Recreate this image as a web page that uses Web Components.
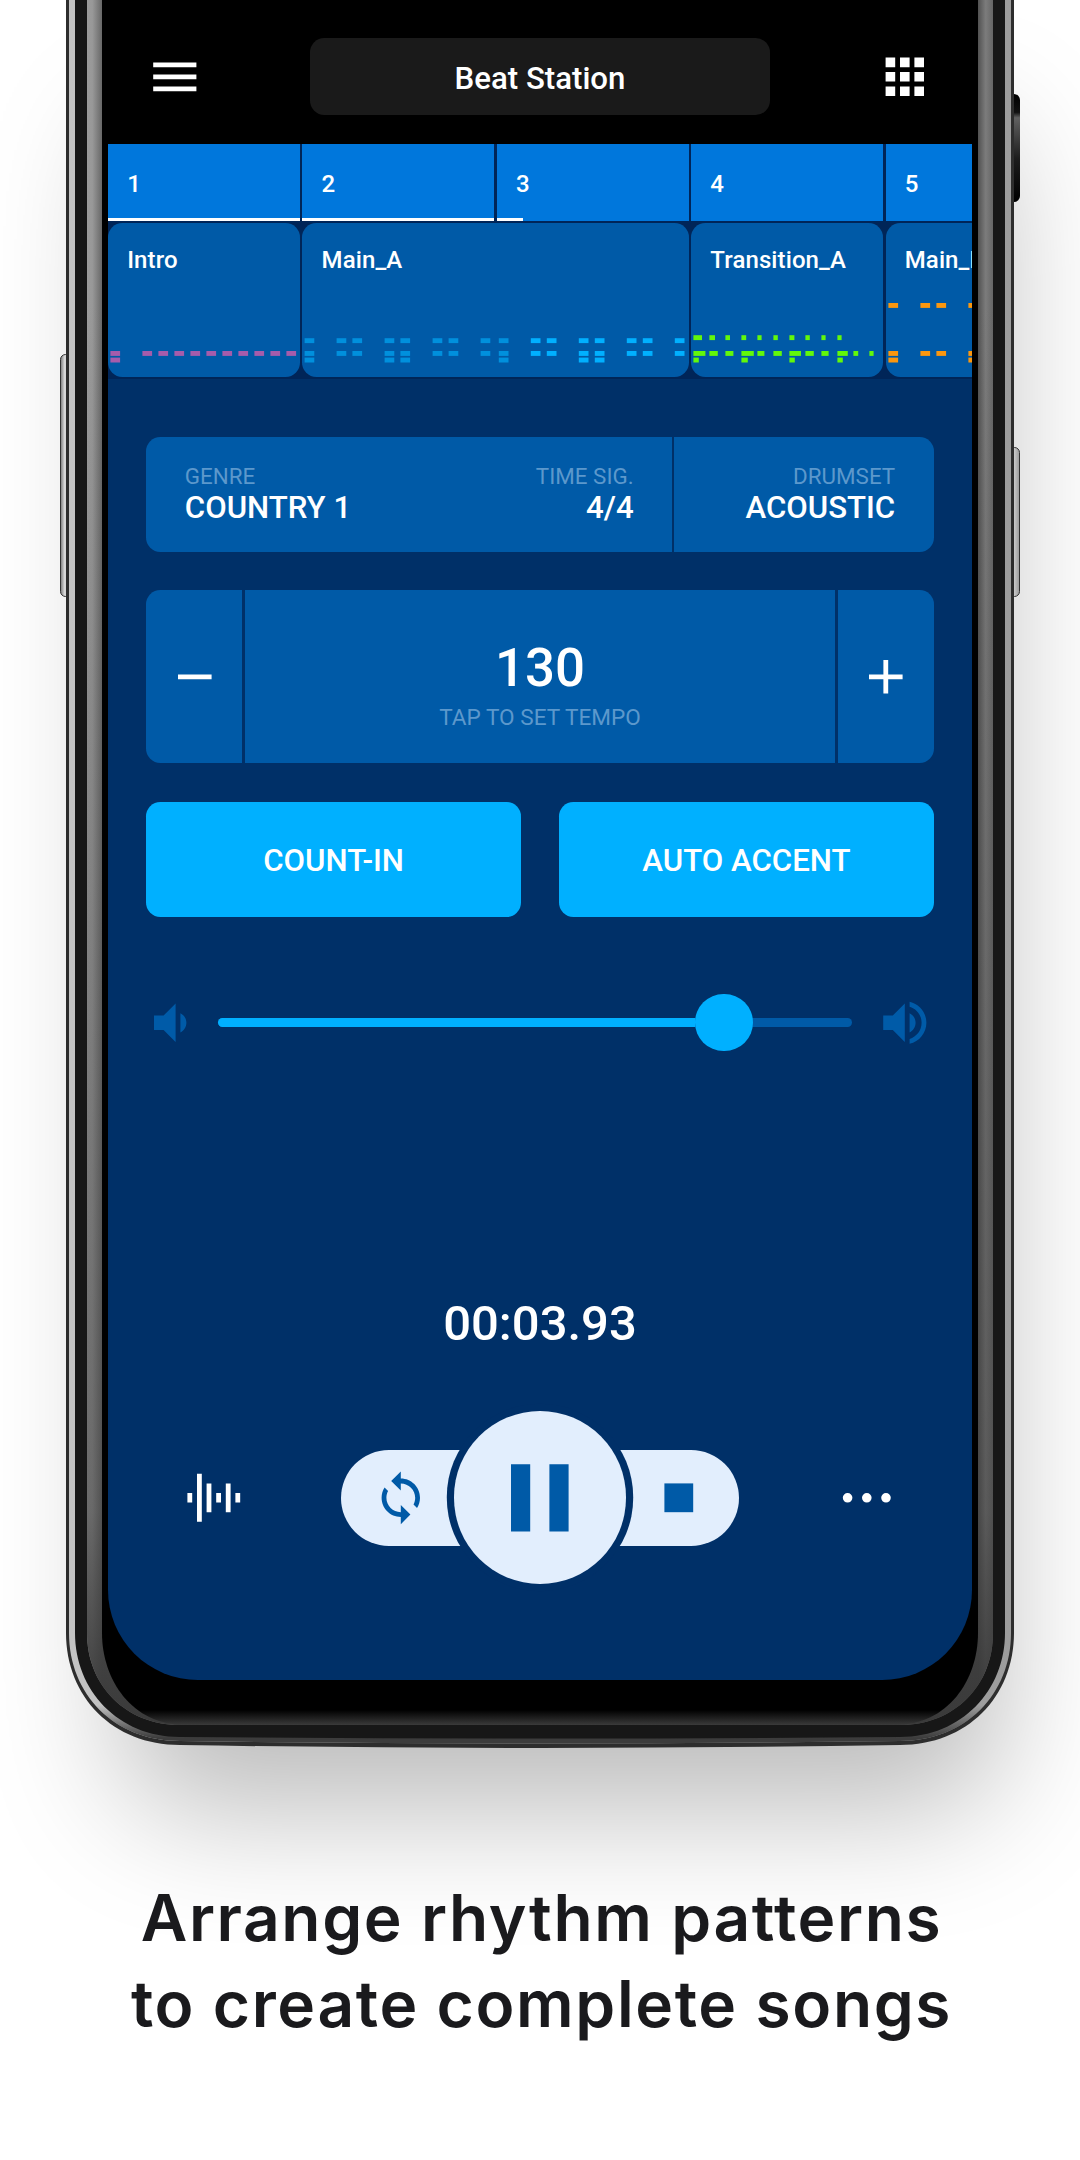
<!DOCTYPE html>
<html lang="en">
<head>
<meta charset="UTF-8">
<title>Beat Station</title>
<style>
  body {
    margin: 0;
    background: #fff;
    overflow: hidden;
  }
</style>
</head>
<body>
<promo-page>
  <phone-frame>
    <app-header>Beat Station</app-header>
    <song-arranger></song-arranger>
    <beat-controls>
      <info-card>
        <info-field label="GENRE">COUNTRY 1</info-field>
        <info-field label="TIME SIG." align="right">4/4</info-field>
        <info-field slot="side" label="DRUMSET" align="right">ACOUSTIC</info-field>
      </info-card>
      <tempo-card bpm="130">TAP TO SET TEMPO</tempo-card>
      <toggle-row>
        <toggle-button>COUNT-IN</toggle-button>
        <toggle-button>AUTO ACCENT</toggle-button>
      </toggle-row>
      <volume-slider></volume-slider>
    </beat-controls>
    <transport-bar time="00:03.93"></transport-bar>
  </phone-frame>
  <promo-caption>
    <span>Arrange rhythm patterns</span>
    <span slot="second">to create complete songs</span>
  </promo-caption>
</promo-page>

<script>
const ICONS = {
    menu: 'M3 18h18v-2H3v2zm0-5h18v-2H3v2zm0-7v2h18V6H3z',
    apps: 'M4 8h4V4H4v4zm6 12h4v-4h-4v4zm-6 0h4v-4H4v4zm0-6h4v-4H4v4zm6 0h4v-4h-4v4zm6-10v4h4V4h-4zm-6 4h4V4h-4v4zm6 6h4v-4h-4v4zm0 6h4v-4h-4v4z',
    minus: 'M19 13H5v-2h14v2z',
    plus: 'M19 13h-6v6h-2v-6H5v-2h6V5h2v6h6v2z',
    volumeDown: 'M18.5 12c0-1.77-1.02-3.29-2.5-4.03v8.05c1.48-.73 2.5-2.25 2.5-4.02zM5 9v6h4l5 5V4L9 9H5z',
    volumeUp: 'M3 9v6h4l5 5V4L7 9H3zm13.5 3c0-1.77-1.02-3.29-2.5-4.03v8.05c1.48-.73 2.5-2.25 2.5-4.02zM14 3.23v2.06c2.89.86 5 3.54 5 6.71s-2.11 5.85-5 6.71v2.06c4.01-.91 7-4.49 7-8.77s-2.99-7.86-7-8.77z',
    sync: 'M12 4V1L8 5l4 4V6c3.31 0 6 2.69 6 6 0 1.01-.25 1.97-.7 2.8l1.46 1.46C19.54 15.03 20 13.57 20 12c0-4.42-3.58-8-8-8zm0 14c-3.31 0-6-2.69-6-6 0-1.01.25-1.97.7-2.8L5.24 7.74C4.46 8.97 4 10.43 4 12c0 4.42 3.58 8 8 8v3l4-4-4-4v3z',
    wave: 'M1 10h2v4H1zM5 2h2v20H5zM9 6h2v12H9zM13 10h2v4h-2zM17 6h2v12h-2zM21 10h2v4h-2z',
    more: 'M6 12a2 2 0 1 1-4 0a2 2 0 1 1 4 0zM14 12a2 2 0 1 1-4 0a2 2 0 1 1 4 0zM22 12a2 2 0 1 1-4 0a2 2 0 1 1 4 0z',
    stop: 'M6 6h12v12H6z',
    pause: 'M0 -2h8v28H0zM16 -2h8v28h-8z'
};

class BaseElement extends HTMLElement {
    constructor() {
        super();
        this.attachShadow({ mode: 'open' });
    }

    connectedCallback() {
        const template = document.createElement('template');
        template.innerHTML = this.render();
        this.shadowRoot.innerHTML = '';
        this.shadowRoot.appendChild(template.content.cloneNode(true));
    }
}

class AppIcon extends BaseElement {
    render() {
        return `
            <style>
                :host { display: block; flex: none; width: 57.6px; height: 57.6px; }
                svg { display: block; width: 100%; height: 100%; fill: currentColor; overflow: visible; }
            </style>
            <svg viewBox="0 0 24 24"><path d="${ICONS[this.getAttribute('name')]}"/></svg>
        `;
    }
}

class PromoPage extends BaseElement {
    render() {
        return `
            <style>
                :host {
                    display: flex;
                    flex-direction: column;
                    align-items: center;
                    width: 1080px;
                    height: 2160px;
                    overflow: hidden;
                    background: #fff;
                }
            </style>
            <slot></slot>
        `;
    }
}

class PhoneFrame extends BaseElement {
    render() {
        return `
            <style>
                :host {
                    display: grid;
                    flex: none;
                    width: 1080px;
                    height: 1748px;
                    justify-items: center;
                }
                .shadow, .body, .screen { grid-area: 1 / 1; }
                .shadow {
                    width: 948px;
                    height: 1744px;
                    border-radius: 0 0 110px 110px;
                    box-shadow: 20px 100px 130px -35px rgba(0, 0, 0, 0.27);
                }
                .body { width: 1080px; height: 1748px; overflow: visible; z-index: 1; }
                .screen {
                    z-index: 2;
                    display: flex;
                    flex-direction: column;
                    width: 864px;
                    height: 1680px;
                    overflow: hidden;
                    border-radius: 0 0 90px 90px;
                    background: #003068;
                    color: #fff;
                    font-family: Roboto, sans-serif;
                    font-weight: 500;
                }
            </style>
            <div class="shadow"></div>
            <svg class="body" viewBox="0 0 1080 1748">
                <defs>
                    <linearGradient id="silver"><stop offset="0" stop-color="#777"/><stop offset=".35" stop-color="#ddd"/><stop offset="1" stop-color="#999"/></linearGradient>
                    <linearGradient id="power" x2="0" y2="1"><stop offset="0" stop-color="#000"/><stop offset=".17" stop-color="#111"/><stop offset=".22" stop-color="#606060"/><stop offset=".6" stop-color="#1c1c1c"/><stop offset="1" stop-color="#000"/></linearGradient>
                    <linearGradient id="edge"><stop offset="0" stop-color="#c4c4c4"/><stop offset="1" stop-color="#9c9c9c"/></linearGradient>
                    <linearGradient id="edgeFade" gradientUnits="userSpaceOnUse" x1="0" y1="1705" x2="0" y2="1738"><stop offset="0" stop-color="#3c3c3c" stop-opacity="0"/><stop offset="1" stop-color="#3c3c3c"/></linearGradient>
                    <linearGradient id="bezel" gradientUnits="userSpaceOnUse" x1="87" y1="0" x2="993" y2="0">
                        <stop offset="0" stop-color="#9c9c9c"/><stop offset=".006" stop-color="#989898"/><stop offset=".0165" stop-color="#686868"/>
                        <stop offset=".984" stop-color="#545454"/><stop offset=".992" stop-color="#7c7c7c"/><stop offset="1" stop-color="#666"/>
                    </linearGradient>
                    <linearGradient id="bezelFade" gradientUnits="userSpaceOnUse" x1="0" y1="300" x2="0" y2="1725"><stop offset="0" stop-color="#3a3a3a" stop-opacity="0"/><stop offset=".85" stop-color="#3a3a3a" stop-opacity=".5"/><stop offset="1" stop-color="#3a3a3a"/></linearGradient>
                    <linearGradient id="glass" gradientUnits="userSpaceOnUse" x1="0" y1="1710" x2="0" y2="1725"><stop offset="0" stop-color="#000"/><stop offset="1" stop-color="#3a3a3a"/></linearGradient>
                </defs>
                <rect x="60.5" y="354.5" width="12" height="242" rx="5" fill="url(#silver)" stroke="#333"/>
                <rect x="1008" y="447.5" width="11.5" height="149" rx="5" fill="url(#silver)" stroke="#333"/>
                <rect x="1008" y="94" width="12" height="108" rx="6" fill="url(#power)"/>
                <path fill="#2d2d2d" d="M66 0V1633C66 1697 113 1745 180 1745Q540 1751 900 1745C967 1745 1014 1697 1014 1633V0Z"/>
                <path fill="url(#edge)" d="M69 0V1633C69 1694 114 1741 180 1741Q540 1746 900 1741C966 1741 1011 1694 1011 1633V0Z"/>
                <path fill="url(#edgeFade)" d="M69 0V1633C69 1694 114 1741 180 1741Q540 1746 900 1741C966 1741 1011 1694 1011 1633V0Z"/>
                <path fill="#171717" d="M75 0V1633C75 1690 118 1737 180 1737Q540 1740 900 1737C962 1737 1005 1690 1005 1633V0Z"/>
                <path fill="url(#bezel)" d="M87 0V1633C87 1685 125 1725 180 1725H900C955 1725 993 1685 993 1633V0Z"/>
                <path fill="url(#bezelFade)" d="M87 0V1633C87 1685 125 1725 180 1725H900C955 1725 993 1685 993 1633V0Z"/>
                <path fill="url(#glass)" d="M102 0V1633C102 1680 132 1725 185 1725H895C948 1725 978 1680 978 1633V0Z"/>
            </svg>
            <div class="screen"><slot></slot></div>
        `;
    }
}

class AppHeader extends BaseElement {
    render() {
        return `
            <style>
                :host {
                    display: flex;
                    flex: none;
                    align-items: center;
                    justify-content: space-between;
                    box-sizing: border-box;
                    height: 144px;
                    padding: 9px 38.4px 0;
                    background: #000;
                }
                .title {
                    width: 460.8px;
                    height: 76.8px;
                    border-radius: 14.4px;
                    background: #1a1a1a;
                    font-size: 31.2px;
                    line-height: 81px;
                    text-align: center;
                }
            </style>
            <app-icon name="menu"></app-icon>
            <div class="title"><slot></slot></div>
            <app-icon name="apps"></app-icon>
        `;
    }
}

class SongArranger extends BaseElement {
    constructor() {
        super();
        this.bars = [1, 1, 0.135, 0, 0];
        this.clips = [
            { name: 'Intro', bars: 1, notes: this.introNotes() },
            { name: 'Main_A', bars: 2, notes: this.mainNotes() },
            { name: 'Transition_A', bars: 1, notes: this.transitionNotes() },
            { name: 'Main_B', bars: 1, notes: this.nextNotes() }
        ];
    }

    // a note is [x, y, width, colour], relative to its clip
    row(y, color, items) {
        return items.map(([x, w = 9.7]) => [x, y, w, color]);
    }

    introNotes() {
        const hats = [[2.4]];
        for (let i = 0; i < 10; i++) hats.push([34.4 + i * 16]);
        return [...this.row(128, '#a65cab', hats), ...this.row(134.6, '#a65cab', [[2.4]])];
    }

    mainNotes() {
        const dim = [2.6, 34.6, 50.4, 82.6, 98.4, 130.6, 146.6, 178.6, 196.8].map(x => [x]);
        const lit = [228.8, 244.8, 276.8, 292.8, 324.8, 340.8, 372.8].map(x => [x]);
        return [
            ...this.row(115.2, '#0090dd', dim), ...this.row(128, '#0090dd', dim),
            ...this.row(134.6, '#0090dd', [dim[0], dim[3], dim[4], dim[8]]),
            ...this.row(115.2, '#00b0ff', lit), ...this.row(128, '#00b0ff', lit),
            ...this.row(134.6, '#00b0ff', [lit[2], lit[3]])
        ];
    }

    transitionNotes() {
        const at = i => 2.4 + i * 16;
        const top = [8.6, 5.6, 4.6, 4.8, 4.2, 4.4, 5, 4.4, 4.2, 4.2];
        const mid = [12, 8.4, 8, 12.4, 7, 8.4, 11.6, 8.4, 7.2, 10.4, 4.8, 4.2];
        return [
            ...this.row(112.2, '#62f80a', top.map((w, i) => [at(i), w])),
            ...this.row(128, '#62f80a', mid.map((w, i) => [at(i), w])),
            ...this.row(134.6, '#62f80a', [[at(0), 5.4], [at(3), 6.4], [at(6), 5.4], [at(9), 5.4]])
        ];
    }

    nextNotes() {
        const hits = [[2.4], [34.4], [50.4], [82.4]];
        return [
            ...this.row(80, '#fb970f', hits),
            ...this.row(128, '#fb970f', hits),
            ...this.row(134.6, '#fb970f', [hits[0], hits[3]])
        ];
    }

    render() {
        const bars = this.bars.map((played, i) => `
            <div class="bar"><span>${i + 1}</span><i style="width:${played * 100}%"></i></div>`).join('');
        const clips = this.clips.map(clip => `
            <div class="clip" style="grid-column: span ${clip.bars}">
                <svg>${clip.notes.map(([x, y, w, c]) => `<rect x="${x}" y="${y}" width="${w}" height="4.9" fill="${c}"/>`).join('')}</svg>
                <span>${clip.name}</span>
            </div>`).join('');
        return `
            <style>
                :host {
                    display: grid;
                    flex: none;
                    grid-template-columns: repeat(5, 192px);
                    grid-template-rows: 76.8px 153.6px;
                    gap: 2.4px;
                    height: 235.2px;
                    overflow: hidden;
                    background: #002558;
                    font-size: 24px;
                    line-height: 28px;
                }
                .bar {
                    display: flex;
                    flex-direction: column;
                    justify-content: space-between;
                    background: #0077dc;
                }
                .bar span { padding: 26px 19.2px 0; }
                .bar i { height: 2.6px; background: #fff; }
                .clip {
                    display: grid;
                    overflow: hidden;
                    border-radius: 14.4px;
                    background: #005aa7;
                }
                .clip span, .clip svg { grid-area: 1 / 1; }
                .clip span { padding: 23px 19.2px 0; letter-spacing: 0.1px; }
                .clip svg { width: 100%; height: 100%; }
            </style>
            ${bars}${clips}
        `;
    }
}

class BeatControls extends BaseElement {
    render() {
        return `
            <style>
                :host {
                    display: flex;
                    flex: none;
                    flex-direction: column;
                    gap: 38.4px;
                    padding: 57.6px 38.4px 0;
                }
            </style>
            <slot></slot>
        `;
    }
}

class InfoCard extends BaseElement {
    render() {
        return `
            <style>
                :host {
                    display: grid;
                    grid-template-columns: 1fr 259.2px;
                    gap: 2.4px;
                    height: 115.2px;
                    overflow: hidden;
                    border-radius: 14.4px;
                }
                div {
                    display: flex;
                    justify-content: space-between;
                    padding: 26px 38.4px 0;
                    background: #005aa7;
                }
                .side { justify-content: flex-end; }
            </style>
            <div><slot></slot></div>
            <div class="side"><slot name="side"></slot></div>
        `;
    }
}

class InfoField extends BaseElement {
    render() {
        return `
            <style>
                :host { display: block; text-align: ${this.getAttribute('align') || 'left'}; white-space: nowrap; }
                .label { font-size: 22.4px; line-height: 27px; font-weight: 400; color: #5c98cc; }
                .value { font-size: 31.2px; line-height: 36px; }
            </style>
            <div class="label">${this.getAttribute('label')}</div>
            <div class="value"><slot></slot></div>
        `;
    }
}

class TempoCard extends BaseElement {
    render() {
        return `
            <style>
                :host {
                    display: grid;
                    grid-template-columns: 96px 1fr 96px;
                    gap: 2.4px;
                    height: 172.8px;
                    overflow: hidden;
                    border-radius: 14.4px;
                }
                .cell {
                    display: flex;
                    flex-direction: column;
                    align-items: center;
                    justify-content: center;
                    background: #005aa7;
                }
                .tap { padding-top: 14px; }
                .bpm { font-size: 52.8px; line-height: 62px; }
                .hint { margin-top: 6px; font-size: 22.6px; line-height: 26px; font-weight: 400; color: #5c98cc; }
            </style>
            <div class="cell"><app-icon name="minus"></app-icon></div>
            <div class="cell tap">
                <div class="bpm">${this.getAttribute('bpm')}</div>
                <div class="hint"><slot></slot></div>
            </div>
            <div class="cell"><app-icon name="plus"></app-icon></div>
        `;
    }
}

class ToggleRow extends BaseElement {
    render() {
        return `
            <style>
                :host { display: grid; grid-template-columns: 1fr 1fr; gap: 38.4px; }
            </style>
            <slot></slot>
        `;
    }
}

class ToggleButton extends BaseElement {
    render() {
        return `
            <style>
                :host { display: block; }
                button {
                    display: block;
                    width: 100%;
                    height: 115.2px;
                    padding: 2px 0 0;
                    border: none;
                    border-radius: 14.4px;
                    background: #00b0ff;
                    color: #fff;
                    font: 500 31.2px Roboto, sans-serif;
                }
            </style>
            <button><slot></slot></button>
        `;
    }
}

class VolumeSlider extends BaseElement {
    render() {
        return `
            <style>
                :host {
                    display: flex;
                    align-items: center;
                    height: 57.6px;
                    margin: 38.4px 0 0 -4.8px;
                    color: #005ba8;
                }
                .track {
                    display: flex;
                    flex: 1;
                    align-items: center;
                    height: 9.6px;
                    margin: 0 24px 0 19.2px;
                    border-radius: 4.8px;
                    background: #005aa7;
                }
                .fill { width: 477px; height: 9.6px; border-radius: 4.8px 0 0 4.8px; background: #00b0ff; }
                .thumb { width: 57.6px; height: 57.6px; border-radius: 50%; background: #00b0ff; }
            </style>
            <app-icon name="volumeDown"></app-icon>
            <div class="track"><div class="fill"></div><div class="thumb"></div></div>
            <app-icon name="volumeUp"></app-icon>
        `;
    }
}

class TransportBar extends BaseElement {
    render() {
        return `
            <style>
                :host {
                    display: flex;
                    flex: 1;
                    flex-direction: column;
                    justify-content: flex-end;
                    padding-bottom: 96px;
                }
                .time { margin-bottom: 59px; font-size: 49px; line-height: 56px; text-align: center; }
                .controls {
                    display: flex;
                    align-items: center;
                    justify-content: space-between;
                    height: 172.8px;
                    padding: 0 76.8px;
                }
                .pill {
                    display: flex;
                    align-items: center;
                    justify-content: space-between;
                    width: 398.4px;
                    height: 96px;
                    border-radius: 48px;
                    background: #e2eefd;
                    color: #005aa7;
                }
                .sync { margin-left: 31.5px; }
                .stop { margin-right: 31.5px; }
                .play {
                    display: flex;
                    align-items: center;
                    justify-content: center;
                    width: 172.8px;
                    height: 172.8px;
                    margin: -38.4px 0;
                    border-radius: 50%;
                    background: #e2eefd;
                    box-shadow: 0 0 0 7.2px #003068;
                }
            </style>
            <div class="time">${this.getAttribute('time')}</div>
            <div class="controls">
                <app-icon name="wave"></app-icon>
                <div class="pill">
                    <app-icon class="sync" name="sync"></app-icon>
                    <div class="play"><app-icon name="pause"></app-icon></div>
                    <app-icon class="stop" name="stop"></app-icon>
                </div>
                <app-icon name="more"></app-icon>
            </div>
        `;
    }
}

class PromoCaption extends BaseElement {
    render() {
        return `
            <style>
                :host {
                    display: block;
                    margin-top: 127px;
                    padding-left: 3px;
                    color: #1a1a1d;
                    font: 600 64px/86px Inter, sans-serif;
                    text-align: center;
                    white-space: nowrap;
                }
                .first { letter-spacing: 1.62px; }
                .second { letter-spacing: 1.62px; }
            </style>
            <div class="first"><slot></slot></div>
            <div class="second"><slot name="second"></slot></div>
        `;
    }
}

customElements.define('app-icon', AppIcon);
customElements.define('promo-page', PromoPage);
customElements.define('phone-frame', PhoneFrame);
customElements.define('app-header', AppHeader);
customElements.define('song-arranger', SongArranger);
customElements.define('beat-controls', BeatControls);
customElements.define('info-card', InfoCard);
customElements.define('info-field', InfoField);
customElements.define('tempo-card', TempoCard);
customElements.define('toggle-row', ToggleRow);
customElements.define('toggle-button', ToggleButton);
customElements.define('volume-slider', VolumeSlider);
customElements.define('transport-bar', TransportBar);
customElements.define('promo-caption', PromoCaption);
</script>
</body>
</html>
